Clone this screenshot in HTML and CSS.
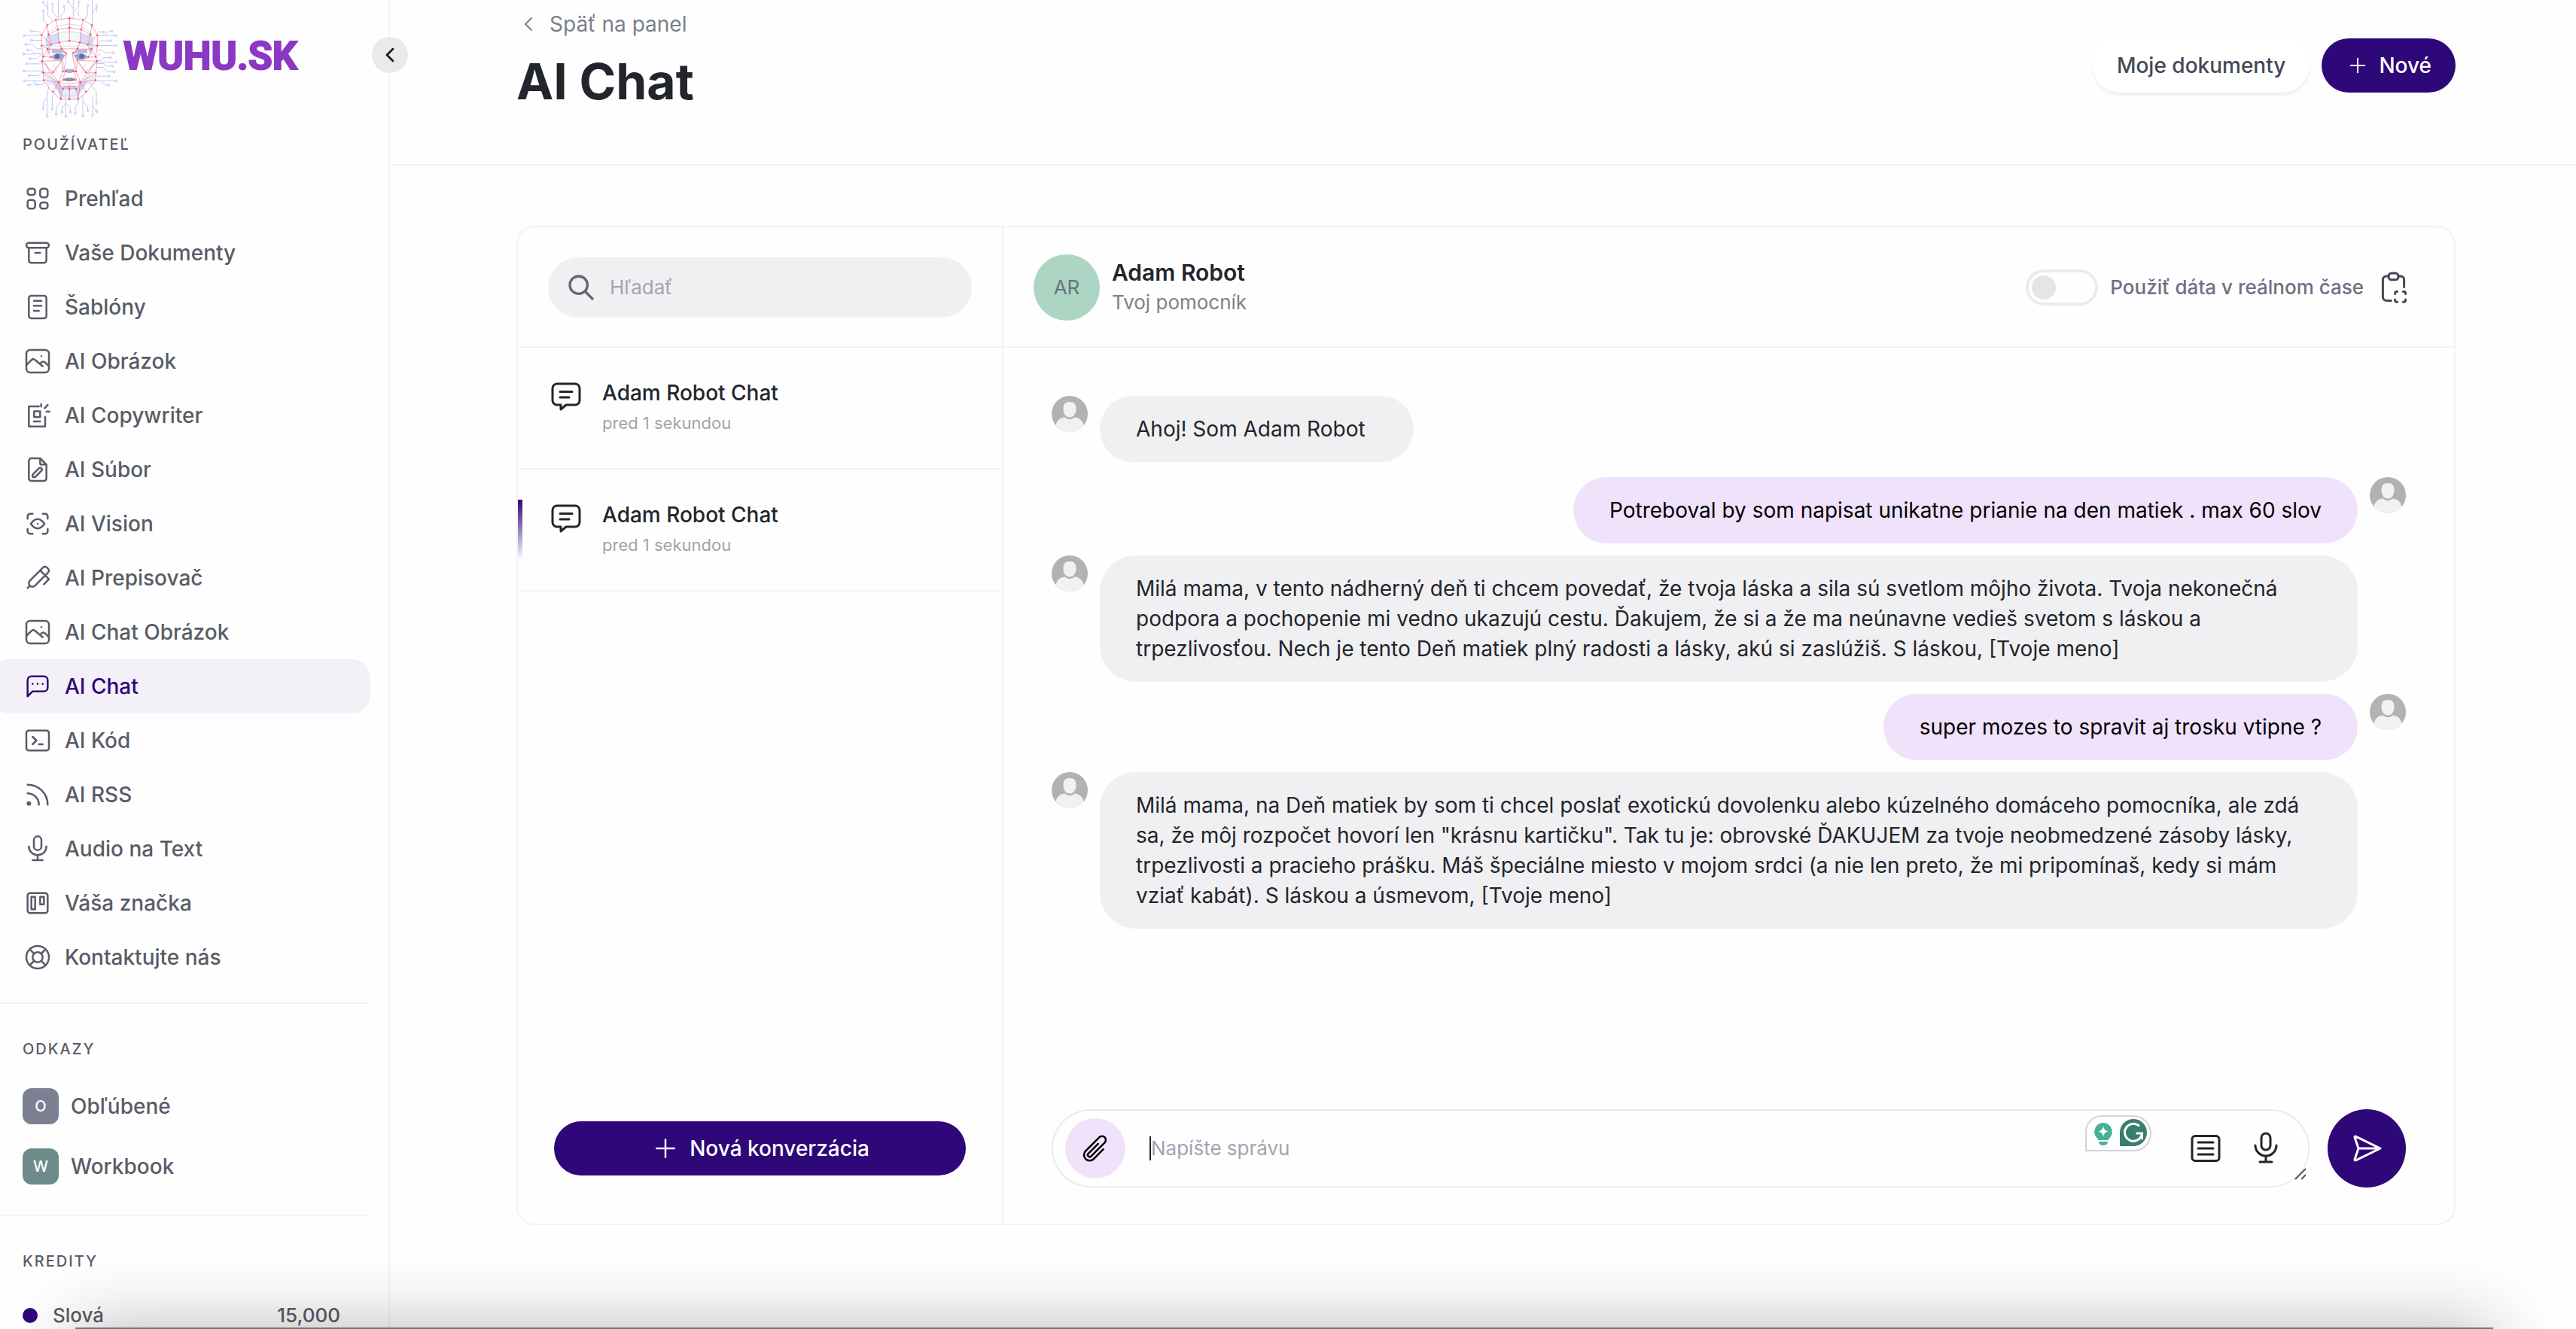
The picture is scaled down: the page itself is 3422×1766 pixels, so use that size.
FILE: index.html
```html
<!DOCTYPE html>
<html lang="sk">
<head>
  <meta charset="UTF-8">
  <meta name="viewport" content="width=device-width, initial-scale=1.0">
  <title>AI Chat | WUHU.SK</title>
  <link rel="stylesheet" href="styles.css">
</head>
<body>

  <!-- Icon sprite -->
  <svg class="sprite" aria-hidden="true">
    <symbol id="i-layout" viewBox="0 0 24 24"><rect x="4" y="4" width="6" height="5" rx="2"/><rect x="4" y="13" width="6" height="7" rx="2"/><rect x="14" y="4" width="6" height="7" rx="2"/><rect x="14" y="15" width="6" height="5" rx="2"/></symbol>
    <symbol id="i-archive" viewBox="0 0 24 24"><rect x="3" y="4" width="18" height="4" rx="2"/><path d="M5 8v10a2 2 0 0 0 2 2h10a2 2 0 0 0 2-2V8M10 12h4"/></symbol>
    <symbol id="i-notes" viewBox="0 0 24 24"><rect x="5" y="3" width="14" height="18" rx="2"/><path d="M9 7h6M9 11h6M9 15h4"/></symbol>
    <symbol id="i-photo" viewBox="0 0 24 24"><rect x="3" y="3" width="18" height="18" rx="3"/><path d="M15 8h.01M3 15l4-4c.928-.893 2.072-.893 3 0l6 5M14 14l1-1c.928-.893 2.072-.893 3 0l3 3"/></symbol>
    <symbol id="i-copy" viewBox="0 0 24 24"><path d="M13 4.8H5V20.800h13V13M9.200 8.700h4.800v4.600H9.200zM9 16.800h5M14.800 3v2M17.600 6.200l2.400-2.500M19 9h2.500"/></symbol>
    <symbol id="i-file" viewBox="0 0 24 24"><path d="M14 3v4a1 1 0 0 0 1 1h4M17 21H7a2 2 0 0 1-2-2V5a2 2 0 0 1 2-2h7l5 5v11a2 2 0 0 1-2 2zM10 18l5-5a1.414 1.414 0 0 0-2-2l-5 5v2h2z"/></symbol>
    <symbol id="i-vision" viewBox="0 0 24 24"><path d="M4 8V6a2 2 0 0 1 2-2h2M4 16v2a2 2 0 0 0 2 2h2M16 4h2a2 2 0 0 1 2 2v2M16 20h2a2 2 0 0 0 2-2v-2M6.500 12c3.600-5 7.400-5 11 0M6.500 12c3.600 5 7.400 5 11 0M12 12h.01"/></symbol>
    <symbol id="i-pen" viewBox="0 0 24 24"><path d="M14 6l7 7-4 4M5.828 18.172a2.828 2.828 0 0 0 4 0L20.414 7.586a2 2 0 0 0 0-2.829l-1.171-1.171a2 2 0 0 0-2.829 0L5.828 14.172a2.828 2.828 0 0 0 0 4zM4 20l1.768-1.768"/></symbol>
    <symbol id="i-dots" viewBox="0 0 24 24"><path d="M4 20V7a3 3 0 0 1 3-3h10a3 3 0 0 1 3 3v6a3 3 0 0 1-3 3H8l-4 4M12 10h.01M8 10h.01M16 10h.01"/></symbol>
    <symbol id="i-code" viewBox="0 0 24 24"><path d="M8 9l3 3-3 3M13 15h3"/><rect x="3" y="4" width="18" height="16" rx="2"/></symbol>
    <symbol id="i-rss" viewBox="0 0 24 24"><circle cx="5" cy="19" r="1"/><path d="M4 4a16 16 0 0 1 16 16M4 11a9 9 0 0 1 9 9"/></symbol>
    <symbol id="i-mic" viewBox="0 0 24 24"><rect x="9" y="2" width="6" height="11" rx="3"/><path d="M5 10a7 7 0 0 0 14 0M8 21h8M12 17v4"/></symbol>
    <symbol id="i-board" viewBox="0 0 24 24"><rect x="4" y="4" width="16" height="16" rx="2"/><path d="M7 7h3v10H7zM14 7h3v6h-3z"/></symbol>
    <symbol id="i-help" viewBox="0 0 24 24"><circle cx="12" cy="12" r="4"/><circle cx="12" cy="12" r="9"/><path d="M15 15l3.350 3.350M9 15l-3.350 3.350M5.650 5.650L9 9M18.350 5.650L15 9"/></symbol>
    <symbol id="i-left" viewBox="0 0 24 24"><path d="M15 6l-6 6 6 6"/></symbol>
    <symbol id="i-plus" viewBox="0 0 24 24"><path d="M12 5v14M5 12h14"/></symbol>
    <symbol id="i-search" viewBox="0 0 24 24"><circle cx="10" cy="10" r="7"/><path d="M21 21l-6-6"/></symbol>
    <symbol id="i-message" viewBox="0 0 24 24"><path d="M18 4a3 3 0 0 1 3 3v8a3 3 0 0 1-3 3h-6l-3.500 3v-3H6a3 3 0 0 1-3-3V7a3 3 0 0 1 3-3h12zM8 9.200h8M8 13h6"/></symbol>
    <symbol id="i-clipboard" viewBox="0 0 24 24"><path d="M8.500 4.500H7a2.300 2.300 0 0 0-2.300 2.300v11.600a2.300 2.300 0 0 0 2.300 2.300h3.200M15 4.500h1.500a2.300 2.300 0 0 1 2.300 2.300v5"/><rect x="8.500" y="2.500" width="6.500" height="4.400" rx="2"/><path d="M12.800 16.300V16a1.200 1.200 0 0 1 1.200-1.200h.3M18.200 14.800h.4a1.200 1.200 0 0 1 1.200 1.200v.3M12.800 20v.4a1.200 1.200 0 0 0 1.200 1.200h.3M18.200 21.600h.4a1.200 1.200 0 0 0 1.200-1.200V20"/></symbol>
    <symbol id="i-list" viewBox="0 0 24 24"><rect x="3" y="3.800" width="18" height="16.400" rx="2"/><path d="M7 8h10M7 12h10M7 16h10"/></symbol>
    <symbol id="i-send" viewBox="0 0 24 24"><path d="M4.698 4.034L21 12 4.698 19.966a.503.503 0 0 1-.546-.124.555.555 0 0 1-.12-.568L6.500 12 4.032 4.726a.555.555 0 0 1 .12-.568.503.503 0 0 1 .546-.124zM6.500 12H21"/></symbol>
    <symbol id="i-clip" viewBox="0 0 24 24"><path d="M18.375 12.739l-7.693 7.693a4.500 4.500 0 0 1-6.364-6.364l10.940-10.940A3 3 0 1 1 19.500 7.372L8.552 18.320M14.250 8.379l-7.810 7.810a1.500 1.500 0 0 0 2.112 2.130"/></symbol>
    <symbol id="i-user" viewBox="0 0 48 48"><circle cx="24" cy="24" r="24" fill="#b2b2b2"/><path d="M5.500 39.500C7 32 12 28.500 18 28.500c3 3.500 9 3.500 12 0 6 0 11 3.500 12.500 11A24 24 0 0 1 5.500 39.500z" fill="#f1f1f1"/><path d="M24 8c6 0 8.500 3 8.500 9.500S29 28.500 24 28.500 15.500 24 15.500 17.500 18 8 24 8z" fill="#f1f1f1"/></symbol>
  </svg>

  <div class="layout">

    <!-- Sidebar -->
    <aside class="sidebar">
      <a class="brand" href="#">
        <svg class="brand-face" viewBox="30 0 378 470" aria-hidden="true">
          <!-- Circuit lines -->
          <g class="circuit">
            <path d="M131 0v62l20 22M172 0v76M112 8l19 28M113 44v40l16 14M149 18v30l22 24M196 28v20l-13 14v14M212 6l20 28M232 0v76M254 10v16l-20 20M253 44v20M308 0v94M289 24v34l-10 20M326 24l-18 30v20M326 24v24"/>
            <path d="M64 124h28l15 14M36 141h72M64 160h44M43 176h26l18 18h22M50 199h12l16 15h30M32 215h46M58 233h28l12-12h16M46 254h62M97 245h14M34 282h74M56 301h36l18-18M38 322h78M53 338h14l14-15M84 337h24l10-10"/>
            <path d="M354 127h-26M401 141h-72M386 124h-12l-16 17M381 162h-42l-12 14M403 181h-74M392 210h-34l-12-12h-18M340 218h-12M380 229h-26l-14 12h-14M403 247h-78M388 263h-24l-10-10h-30M395 286h-26l-18-18h-26M374 303h-54M403 322h-82M373 339h-14l-18-17"/>
            <path d="M128 463v-86l6-30M112 432v-26l16-18M148 434v-50l12-14M164 455v-28l20-24M202 463v-66M187 447v-18l15-16M220 447v-16l-16-20M240 452v-24l12-18v-14M270 463v-84M289 440v-16l-18-20M309 460v-82M326 445l-17-22M324 412v-50l-22-20M326 445v-12"/>
            <circle cx="112" cy="8" r="4"/><circle cx="113" cy="42" r="4"/><circle cx="149" cy="16" r="4"/><circle cx="196" cy="26" r="4"/><circle cx="212" cy="5" r="4"/><circle cx="254" cy="8" r="4"/><circle cx="289" cy="22" r="4"/><circle cx="326" cy="22" r="4"/>
            <circle cx="64" cy="124" r="4"/><circle cx="35" cy="141" r="4"/><circle cx="64" cy="160" r="4"/><circle cx="43" cy="176" r="4"/><circle cx="50" cy="199" r="4"/><circle cx="34" cy="215" r="4"/><circle cx="58" cy="233" r="4"/><circle cx="46" cy="254" r="4"/><circle cx="35" cy="282" r="4"/><circle cx="56" cy="301" r="4"/><circle cx="38" cy="322" r="4"/><circle cx="53" cy="339" r="4"/><circle cx="84" cy="337" r="4"/>
            <circle cx="354" cy="127" r="4"/><circle cx="386" cy="124" r="4"/><circle cx="401" cy="141" r="4"/><circle cx="381" cy="162" r="4"/><circle cx="403" cy="181" r="4"/><circle cx="392" cy="210" r="4"/><circle cx="380" cy="229" r="4"/><circle cx="403" cy="247" r="4"/><circle cx="388" cy="263" r="4"/><circle cx="395" cy="286" r="4"/><circle cx="374" cy="303" r="4"/><circle cx="403" cy="322" r="4"/><circle cx="373" cy="339" r="4"/>
            <circle cx="128" cy="463" r="4"/><circle cx="112" cy="433" r="4"/><circle cx="148" cy="434" r="4"/><circle cx="164" cy="455" r="4"/><circle cx="187" cy="447" r="4"/><circle cx="202" cy="463" r="4"/><circle cx="220" cy="447" r="4"/><circle cx="240" cy="452" r="4"/><circle cx="270" cy="463" r="4"/><circle cx="289" cy="440" r="4"/><circle cx="309" cy="460" r="4"/><circle cx="326" cy="445" r="4"/><circle cx="324" cy="412" r="4"/>
          </g>
          <path d="M217 72l55 7 34 21 22 40v60l-5 90-38 76-33 29h-70l-32-29-38-76-4-90v-60l22-40 34-21z" fill="#fff"/>
          <!-- One half of the face, mirrored below -->
          <g id="half-face">
            <path d="M217 128l-42 4 2 42 40-12z" fill="#effafa"/>
            <path d="M175 130l-38 12 6 36 34-6zM134 120l-14 40 10 60 14-22z" fill="#d5dcf8"/>
            <path d="M110 290l20 50 44-14zM217 360h-26l-9 32h35z" fill="#e3effb"/>
            <path d="M174 328l-30-4 40 60 8-34z" fill="#cbd3fa"/>
            <path d="M146 196h44l14 14-58 2z" fill="#b6bee6"/>
            <path d="M144 226q18-18 42-12l14 6-12 18q-26 4-44-12z" fill="#9ba5c9"/>
            <circle cx="168" cy="224" r="10" fill="#5d6ba8"/>
            <path d="M217 276q-18-6-18 8 8 8 18 6z" fill="#a5acd0"/>
            <path d="M217 310q-18 0-30 10l30 4z" fill="#7f8cae"/>
            <path d="M217 342h-26v12h26z" fill="#c3c9e8"/>
            <g class="wire"><path d="M217 95l-48 8-38 30M217 126l-44 4-36 14M145 183h72M122 250l20 50 44 82h31M150 250l20 40M190 225l4 60"/></g>
            <g class="mesh">
              <path d="M217 72l-54 7-35 21-22 40v41l6 44-4 17 4 48 2 31 35 45 33 29h35M217 72v90M163 79l7 38 6 52M217 110l-47 7-36 21-6-38M134 138l10 40-36-38M217 162l-41 7-32 9-38 3M176 169l9 24 17 18M106 181l24 14h55M217 194h-32M130 195l-18 31 30 1 24 14M130 195l12 32M202 211l-16 30-78 2 44 44 34-46 4 44M206 212l-10 60 4 12 17 4M108 243l66 84M186 241l-34 50-40-2 62 38M191 284l-17 43-60-8M174 327l-22 38M174 327l17 27 26 1M174 327l8 67M191 354l-9 40M217 310l-22 2-21 15 20 4h23M191 342h26M217 340v55M200 284l-9 28"/>
              <path class="knot" d="M217 72h.1M163 79h.1M128 100h.1M106 140h.1M106 181h.1M217 110h.1M170 117h.1M134 138h.1M217 162h.1M176 169h.1M144 178h.1M130 195h.1M185 193h.1M202 211h.1M112 226h.1M142 227h.1M108 243h.1M112 289h.1M191 284h.1M152 287h.1M114 319h.1M174 327h.1M151 365h.1M191 354h.1M182 394h.1M217 395h.1M217 355h.1M200 284h.1"/>
            </g>
          </g>
          <use href="#half-face" transform="translate(434 0) scale(-1 1)"/>
        </svg>
        <span class="brand-name">WUHU.SK</span>
      </a>

      <h2 class="side-label">Používateľ</h2>
      <nav class="side-nav">
        <a class="nav-item" href="#"><svg class="icon"><use href="#i-layout"/></svg>Prehľad</a>
        <a class="nav-item" href="#"><svg class="icon"><use href="#i-archive"/></svg>Vaše Dokumenty</a>
        <a class="nav-item" href="#"><svg class="icon"><use href="#i-notes"/></svg>Šablóny</a>
        <a class="nav-item" href="#"><svg class="icon"><use href="#i-photo"/></svg>AI Obrázok</a>
        <a class="nav-item" href="#"><svg class="icon"><use href="#i-copy"/></svg>AI Copywriter</a>
        <a class="nav-item" href="#"><svg class="icon"><use href="#i-file"/></svg>AI Súbor</a>
        <a class="nav-item" href="#"><svg class="icon"><use href="#i-vision"/></svg>AI Vision</a>
        <a class="nav-item" href="#"><svg class="icon"><use href="#i-pen"/></svg>AI Prepisovač</a>
        <a class="nav-item" href="#"><svg class="icon"><use href="#i-photo"/></svg>AI Chat Obrázok</a>
        <a class="nav-item active" href="#"><svg class="icon"><use href="#i-dots"/></svg>AI Chat</a>
        <a class="nav-item" href="#"><svg class="icon"><use href="#i-code"/></svg>AI Kód</a>
        <a class="nav-item" href="#"><svg class="icon"><use href="#i-rss"/></svg>AI RSS</a>
        <a class="nav-item" href="#"><svg class="icon"><use href="#i-mic"/></svg>Audio na Text</a>
        <a class="nav-item" href="#"><svg class="icon"><use href="#i-board"/></svg>Váša značka</a>
        <a class="nav-item" href="#"><svg class="icon"><use href="#i-help"/></svg>Kontaktujte nás</a>
      </nav>

      <section class="side-section">
        <h2 class="side-label">Odkazy</h2>
        <div class="side-links">
          <a class="side-link" href="#"><span class="badge">O</span>Obľúbené</a>
          <a class="side-link" href="#"><span class="badge badge-green">W</span>Workbook</a>
        </div>
      </section>

      <section class="side-section">
        <h2 class="side-label">Kredity</h2>
        <div class="credit">
          <span class="credit-dot"></span>
          <span>Slová</span>
          <span class="credit-value">15,000</span>
        </div>
      </section>

      <button class="collapse" type="button" aria-label="Zbaliť menu"><svg class="icon"><use href="#i-left"/></svg></button>
    </aside>

    <!-- Main content -->
    <main class="main">
      <header class="page-header">
        <div class="page-title">
          <a class="back" href="#"><svg class="icon"><use href="#i-left"/></svg>Späť na panel</a>
          <h1>AI Chat</h1>
        </div>
        <div class="page-actions">
          <button class="btn btn-white" type="button">Moje dokumenty</button>
          <button class="btn btn-primary" type="button"><svg class="icon"><use href="#i-plus"/></svg>Nové</button>
        </div>
      </header>

      <div class="chat-card">
        <!-- Conversations -->
        <section class="conversations">
          <div class="panel-top">
            <label class="search">
              <svg class="icon"><use href="#i-search"/></svg>
              <input type="search" placeholder="Hľadať" aria-label="Hľadať">
            </label>
          </div>
          <ul class="conversation-list">
            <li><a class="conversation" href="#">
              <svg class="icon"><use href="#i-message"/></svg>
              <span class="conversation-text"><strong>Adam Robot Chat</strong><small>pred 1 sekundou</small></span>
            </a></li>
            <li><a class="conversation current" href="#">
              <svg class="icon"><use href="#i-message"/></svg>
              <span class="conversation-text"><strong>Adam Robot Chat</strong><small>pred 1 sekundou</small></span>
            </a></li>
          </ul>
          <button class="btn btn-primary new-chat" type="button"><svg class="icon"><use href="#i-plus"/></svg>Nová konverzácia</button>
        </section>

        <!-- Chat -->
        <section class="chat">
          <div class="panel-top chat-top">
            <span class="initials">AR</span>
            <div class="person">
              <strong>Adam Robot</strong>
              <span>Tvoj pomocník</span>
            </div>
            <label class="realtime"><input class="switch" type="checkbox">Použiť dáta v reálnom čase</label>
            <button class="icon-btn" type="button" aria-label="Šablóny promptov"><svg class="icon"><use href="#i-clipboard"/></svg></button>
          </div>

          <div class="messages">
            <div class="message greeting">
              <svg class="avatar"><use href="#i-user"/></svg>
              <p class="bubble">Ahoj! Som Adam Robot</p>
            </div>
            <div class="message mine">
              <svg class="avatar"><use href="#i-user"/></svg>
              <p class="bubble">Potreboval by som napisat unikatne prianie na den matiek . max 60 slov</p>
            </div>
            <div class="message">
              <svg class="avatar"><use href="#i-user"/></svg>
              <p class="bubble">Milá mama, v tento nádherný deň ti chcem povedať, že tvoja láska a sila sú svetlom môjho života. Tvoja nekonečná podpora a pochopenie mi vedno ukazujú cestu. Ďakujem, že si a že ma neúnavne vedieš svetom s láskou a trpezlivosťou. Nech je tento Deň matiek plný radosti a lásky, akú si zaslúžiš. S láskou, [Tvoje meno]</p>
            </div>
            <div class="message mine">
              <svg class="avatar"><use href="#i-user"/></svg>
              <p class="bubble">super mozes to spravit aj trosku vtipne ?</p>
            </div>
            <div class="message">
              <svg class="avatar"><use href="#i-user"/></svg>
              <p class="bubble">Milá mama, na Deň matiek by som ti chcel poslať exotickú dovolenku alebo kúzelného domáceho pomocníka, ale zdá sa, že môj rozpočet hovorí len "krásnu kartičku". Tak tu je: obrovské ĎAKUJEM za tvoje neobmedzené zásoby lásky, trpezlivosti a pracieho prášku. Máš špeciálne miesto v mojom srdci (a nie len preto, že mi pripomínaš, kedy si mám vziať kabát). S láskou a úsmevom, [Tvoje meno]</p>
            </div>
          </div>

          <form class="composer">
            <div class="composer-box">
              <button class="attach" type="button" aria-label="Priložiť súbor"><svg class="icon"><use href="#i-clip"/></svg></button>
              <span class="caret"></span>
              <textarea rows="1" placeholder="Napíšte správu" aria-label="Napíšte správu"></textarea>
              <svg class="assistant" viewBox="0 0 88 48" aria-hidden="true">
                <path d="M1 47V22A21 21 0 0 1 22 1h42a23 23 0 0 1 0 46z" fill="#fff" stroke="#d3d2e0" stroke-width="2"/>
                <path d="M24 10a12 12 0 0 1 7 21.500V33H17v-1.500A12 12 0 0 1 24 10zM18 35h12v1q-1 4-6 4t-6-4z" fill="#46b195"/>
                <path d="M24 14.500q1 6 6.500 7-5.500 1-6.500 7-1-6-6.500-7 5.500-1 6.500-7z" fill="#fff"/>
                <path d="M46 41V23a18 18 0 1 1 18 18z" fill="#397d6d"/>
                <path d="M72 14.500a11.500 11.500 0 1 0 3.500 9.500h-8M75.500 24v8" fill="none" stroke="#fff" stroke-width="3"/>
              </svg>
              <button class="icon-btn" type="button" aria-label="Knižnica promptov"><svg class="icon"><use href="#i-list"/></svg></button>
              <button class="icon-btn" type="button" aria-label="Nahrať hlas"><svg class="icon"><use href="#i-mic"/></svg></button>
              <svg class="grip" viewBox="0 0 16 16" aria-hidden="true"><path d="M1 15L15 1M9 15l6-6"/></svg>
            </div>
            <button class="send" type="submit" aria-label="Odoslať"><svg class="icon"><use href="#i-send"/></svg></button>
          </form>
        </section>
      </div>
    </main>
  </div>

  <div class="window-edge"></div>

</body>
</html>
```
FILE: styles.css
```css
/* General */
* {
  box-sizing: border-box;
}

body {
  margin: 0;
  height: 100vh;
  overflow: hidden;
  background-color: #fefefe;
  color: #22252b;
  font-family: Inter, "Liberation Sans", sans-serif;
  font-size: 28px;
  line-height: 40px;
}

h1, h2, p, ul {
  margin: 0;
  padding: 0;
}

a {
  color: inherit;
  text-decoration: none;
}

button, input, textarea {
  font: inherit;
  color: inherit;
}

button {
  border: none;
  background: none;
  padding: 0;
  cursor: pointer;
}

.sprite {
  display: none;
}

.icon {
  flex: none;
  width: 40px;
  height: 40px;
  fill: none;
  stroke: currentColor;
  stroke-width: 1.5;
  stroke-linecap: round;
  stroke-linejoin: round;
}

.layout {
  display: flex;
  height: 100%;
}

/* Sidebar */
.sidebar {
  position: relative;
  flex: none;
  width: 518px;
  padding-right: 24px;
  border-right: 2px solid #f3f3f4;
  color: #585c67;
  font-weight: 500;
}

.brand {
  display: flex;
  align-items: flex-start;
  gap: 8px;
  height: 180px;
  padding-left: 30px;
}

.brand-face {
  width: 126px;
  height: 157px;
}

.brand-name {
  padding-top: 43px;
  color: #8b38c4;
  font-family: Roboto, "Liberation Sans", sans-serif;
  font-size: 52px;
  font-weight: 700;
  line-height: 64px;
  -webkit-text-stroke: 2px #8b38c4;
}

.circuit {
  fill: none;
  stroke: #c3c6f3;
  stroke-width: 3;
}

.wire {
  fill: none;
  stroke: #d3dbe0;
  stroke-width: 3;
}

.mesh {
  fill: none;
  stroke: #f0788c;
  stroke-width: 2;
}

.knot {
  stroke: #ee3f5b;
  stroke-width: 7;
  stroke-linecap: round;
}

.side-label {
  padding-left: 30px;
  font-size: 20px;
  font-weight: 500;
  line-height: 24px;
  letter-spacing: 2px;
  text-transform: uppercase;
}

.side-nav {
  margin: 24px 0 24px -12px;
}

.nav-item {
  display: flex;
  align-items: center;
  gap: 16px;
  height: 72px;
  padding-left: 42px;
  border-radius: 24px;
}

.nav-item.active {
  background-color: #f3f0f8;
  color: #2e0779;
}

.side-section {
  padding: 48px 0 40px;
  border-top: 2px solid #f3f3f4;
}

.side-links {
  display: flex;
  flex-direction: column;
  gap: 32px;
  padding: 40px 0 0 30px;
}

.side-link {
  display: flex;
  align-items: center;
  gap: 16px;
  height: 48px;
}

.badge {
  width: 48px;
  height: 48px;
  border-radius: 12px;
  background-color: #7d8092;
  color: #fff;
  font-size: 20px;
  line-height: 48px;
  text-align: center;
}

.badge-green {
  background-color: #6c8b8a;
}

.credit {
  display: flex;
  align-items: center;
  gap: 20px;
  padding: 40px 40px 0 30px;
  font-size: 26px;
}

.credit-dot {
  width: 20px;
  height: 20px;
  border-radius: 50%;
  background-color: #2e0779;
}

.credit-value {
  margin-left: auto;
}

.collapse {
  position: absolute;
  top: 49px;
  right: -26px;
  display: flex;
  align-items: center;
  justify-content: center;
  width: 48px;
  height: 48px;
  border-radius: 50%;
  background-color: #e9eaec;
  color: #15171a;
}

.collapse .icon {
  width: 32px;
  height: 32px;
  stroke-width: 2;
}

/* Page header */
.main {
  flex: 1;
  min-width: 0;
  display: flex;
  flex-direction: column;
}

.page-header {
  display: flex;
  align-items: center;
  justify-content: space-between;
  padding: 12px 160px 56px 168px;
  border-bottom: 2px solid #f3f3f4;
}

.page-title {
  display: flex;
  flex-direction: column;
  gap: 18px;
  padding-bottom: 16px;
}

.back {
  display: flex;
  align-items: center;
  gap: 12px;
  color: #7b7f8a;
}

.back .icon {
  width: 32px;
  height: 32px;
}

h1 {
  font-size: 66px;
  font-weight: 700;
  line-height: 76px;
}

.page-actions {
  display: flex;
  gap: 16px;
}

.btn {
  display: flex;
  align-items: center;
  justify-content: center;
  gap: 12px;
  height: 72px;
  padding: 0 32px;
  border-radius: 36px;
  font-weight: 500;
}

.btn .icon {
  width: 32px;
  height: 32px;
}

.btn-white {
  background-color: #fff;
  color: #434955;
  box-shadow: 0 4px 4px rgba(0, 0, 0, 0.06);
}

.btn-primary {
  background-color: #2e0779;
  color: #fff;
}

/* Chat card */
.chat-card {
  flex: 1;
  display: flex;
  min-height: 0;
  margin: 80px 160px 138px 168px;
  border: 2px solid #f3f3f4;
  border-radius: 24px;
}

.panel-top {
  display: flex;
  align-items: center;
  height: 160px;
  padding: 2px 40px 0;
  border-bottom: 2px solid #f3f3f4;
}

.conversations {
  display: flex;
  flex-direction: column;
  width: calc(25% + 2px);
  border-right: 2px solid #f3f3f4;
}

.search {
  display: flex;
  flex: 1;
  align-items: center;
  gap: 18px;
  min-width: 0;
  height: 80px;
  padding: 0 24px;
  border-radius: 40px;
  background-color: #f0f0f2;
  color: #62666f;
}

.search .icon {
  stroke-width: 2;
}

.search input {
  flex: 1;
  min-width: 0;
  padding: 0;
  border: none;
  outline: none;
  background: none;
  font-size: 26px;
}

::placeholder {
  color: #a0a5b1;
  opacity: 1;
}

.conversation-list {
  flex: 1;
  list-style: none;
}

.conversation {
  position: relative;
  display: flex;
  gap: 24px;
  height: 162px;
  padding: 40px;
  border-bottom: 2px solid #f3f3f4;
}

.conversation .icon {
  width: 48px;
  height: 48px;
}

.conversation.current::before {
  content: "";
  position: absolute;
  top: 40px;
  left: 0;
  width: 6px;
  height: 80px;
  background-image: linear-gradient(#2e0779, rgba(46, 7, 121, 0));
}

.conversation-text {
  display: flex;
  flex-direction: column;
}

.conversation strong {
  font-weight: 500;
}

.conversation small {
  color: #a3a4a7;
  font-size: 22px;
}

.new-chat {
  margin: 0 48px 64px;
}

.new-chat .icon {
  width: 40px;
  height: 40px;
}

/* Chat header */
.chat {
  flex: 1;
  display: flex;
  flex-direction: column;
  min-width: 0;
}

.initials {
  width: 88px;
  height: 88px;
  margin-right: 16px;
  border-radius: 50%;
  background-color: #add5c3;
  color: #64757b;
  font-size: 26px;
  line-height: 88px;
  text-align: center;
}

.person {
  display: flex;
  flex-direction: column;
  margin-right: auto;
}

.person strong {
  font-size: 30px;
  font-weight: 600;
}

.person span {
  color: #808186;
  font-size: 26px;
}

.realtime {
  display: flex;
  align-items: center;
  gap: 16px;
  margin-right: 16px;
  color: #6b7183;
  font-size: 26px;
  font-weight: 500;
}

.switch {
  appearance: none;
  display: flex;
  align-items: center;
  width: 96px;
  height: 48px;
  margin: 0;
  padding-left: 4px;
  border: 4px solid #ebebec;
  border-radius: 24px;
}

.switch::before {
  content: "";
  width: 32px;
  height: 32px;
  border-radius: 50%;
  background-color: #e4e5e8;
}

.switch:checked::before {
  margin-left: 48px;
  background-color: #2e0779;
}

.icon-btn {
  display: flex;
  color: #22252b;
}

.icon-btn .icon {
  width: 48px;
  height: 48px;
}

.chat-top {
  padding-right: 56px;
}

.chat-top .icon-btn {
  color: #434955;
}

/* Messages */
.messages {
  flex: 1;
  display: flex;
  flex-direction: column;
  gap: 16px;
  padding: 64px;
}

.message {
  display: flex;
  align-items: flex-start;
  gap: 16px;
  padding-right: 64px;
}

.message.mine {
  flex-direction: row-reverse;
  padding: 0 0 0 64px;
}

.avatar {
  flex: none;
  width: 48px;
  height: 48px;
}

.bubble {
  padding: 24px 48px;
  border-radius: 48px;
  background-color: #f0f0f2;
}

.mine .bubble {
  background-color: #f1e2fb;
  color: #000;
}

.greeting {
  margin-bottom: 4px;
}

.greeting .bubble {
  padding-right: 64px;
}

/* Composer */
.composer {
  display: flex;
  gap: 24px;
  padding: 0 64px 48px;
}

.composer-box {
  position: relative;
  flex: 1;
  display: flex;
  align-items: center;
  height: 104px;
  padding: 0 32px 0 16px;
  border: 2px solid #ebebeb;
  border-radius: 52px;
}

.attach {
  display: flex;
  align-items: center;
  justify-content: center;
  width: 80px;
  height: 80px;
  margin-right: 32px;
  border-radius: 50%;
  background-color: #f1e2fb;
  color: #000;
}

.caret {
  width: 2px;
  height: 32px;
  background-color: #22252b;
}

.composer textarea {
  flex: 1;
  min-width: 0;
  height: 40px;
  padding: 0;
  border: none;
  outline: none;
  background: none;
  resize: none;
  font-size: 26px;
}

.assistant {
  align-self: flex-start;
  width: 88px;
  height: 48px;
  margin: 6px 48px 0 0;
}

.composer-box .icon-btn + .icon-btn {
  margin-left: 32px;
}

.grip {
  position: absolute;
  right: 2px;
  bottom: 8px;
  width: 16px;
  height: 16px;
  stroke: #55565a;
  stroke-width: 2;
}

.send {
  display: flex;
  align-items: center;
  justify-content: center;
  width: 104px;
  height: 104px;
  border-radius: 50%;
  background-color: #2e0779;
  color: #fff;
}

.send .icon {
  width: 48px;
  height: 48px;
}

/* Shadow along the bottom edge of the window */
.window-edge {
  position: fixed;
  right: 110px;
  bottom: -198px;
  left: 100px;
  height: 200px;
  border-top: 2px solid #77777a;
  box-shadow: 0 0 96px rgba(0, 0, 0, 0.28);
  pointer-events: none;
}
```
